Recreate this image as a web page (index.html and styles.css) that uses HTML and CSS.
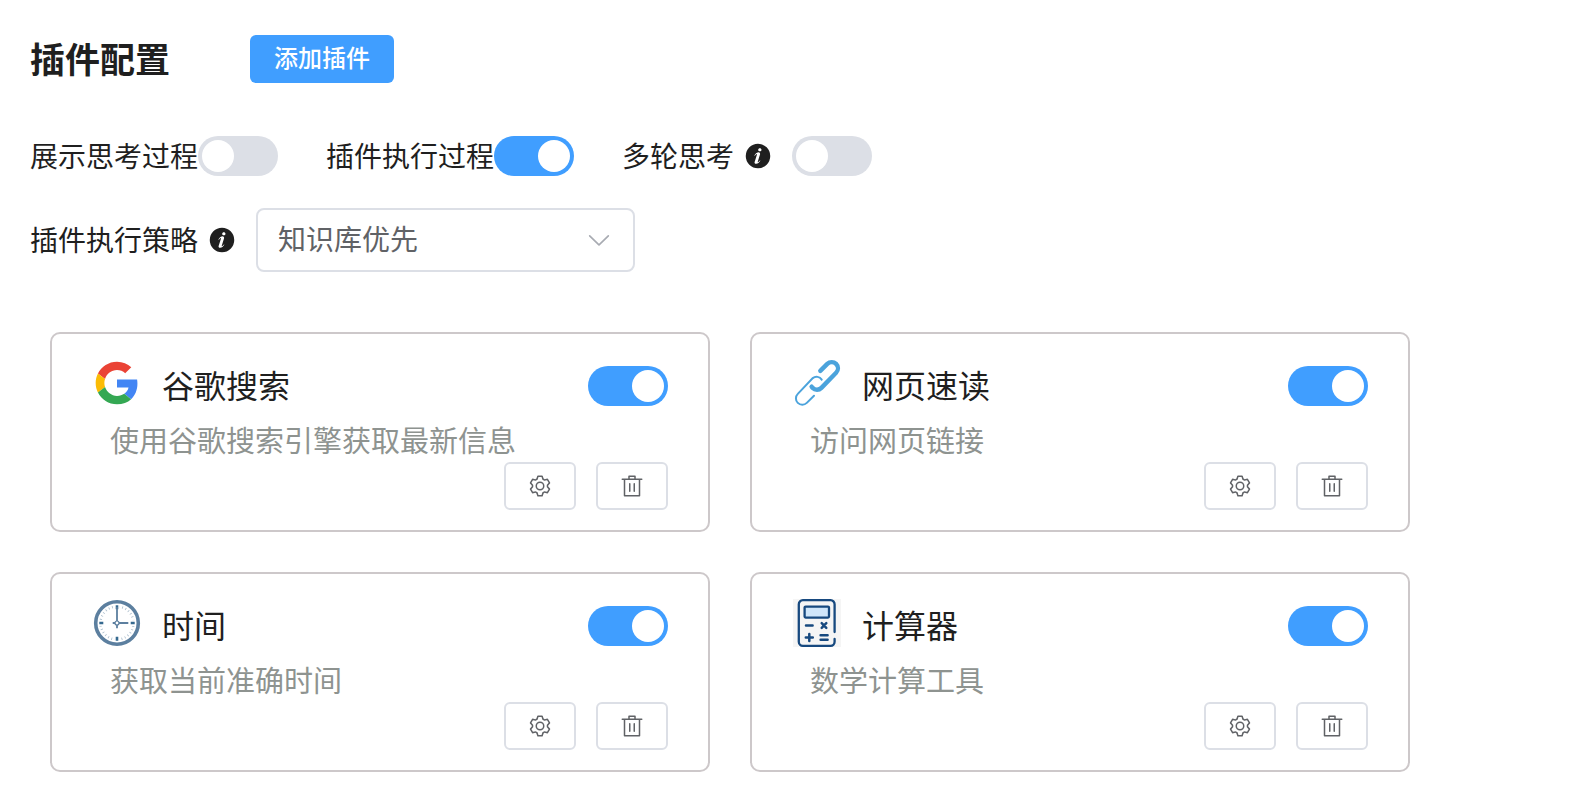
FILE: index.html
```html
<!DOCTYPE html>
<html lang="zh-CN">
<head>
<meta charset="UTF-8">
<meta name="viewport" content="width=device-width, initial-scale=1">
<title>插件配置</title>
<link rel="stylesheet" href="styles.css">
</head>
<body>
<svg class="sprite" aria-hidden="true">
  <symbol id="icon-setting" viewBox="0 0 1024 1024"><path fill="currentColor" d="M600.704 64a32 32 0 0 1 30.464 22.208l35.2 109.376c14.784 7.232 28.928 15.36 42.432 24.512l112.384-24.192a32 32 0 0 1 34.432 15.36L944.32 364.8a32 32 0 0 1-4.032 37.504l-77.12 85.12a357.12 357.12 0 0 1 0 49.024l77.12 85.248a32 32 0 0 1 4.032 37.504l-88.704 153.6a32 32 0 0 1-34.432 15.296L708.8 803.904c-13.44 9.088-27.648 17.28-42.368 24.512l-35.264 109.376A32 32 0 0 1 600.704 960H423.296a32 32 0 0 1-30.464-22.208L357.696 828.48a351.616 351.616 0 0 1-42.56-24.64l-112.32 24.256a32 32 0 0 1-34.432-15.36L79.68 659.2a32 32 0 0 1 4.032-37.504l77.12-85.248a357.12 357.12 0 0 1 0-48.896l-77.12-85.248A32 32 0 0 1 79.68 364.8l88.704-153.6a32 32 0 0 1 34.432-15.296l112.32 24.256c13.568-9.152 27.776-17.408 42.56-24.64l35.2-109.312A32 32 0 0 1 423.232 64H600.64zm-23.424 64H446.72l-36.352 113.088-24.512 11.968a294.113 294.113 0 0 0-34.816 20.096l-22.656 15.36-116.224-25.088-65.28 113.152 79.68 88.192-1.92 27.136a293.12 293.12 0 0 0 0 40.192l1.92 27.136-79.808 88.192 65.344 113.152 116.224-25.024 22.656 15.296a294.113 294.113 0 0 0 34.816 20.096l24.512 11.968L446.72 896h130.688l36.48-113.152 24.448-11.904a288.282 288.282 0 0 0 34.752-20.096l22.592-15.296 116.288 25.024 65.28-113.152-79.744-88.192 1.92-27.136a293.12 293.12 0 0 0 0-40.256l-1.92-27.136 79.808-88.128-65.344-113.152-116.288 24.96-22.592-15.232a287.616 287.616 0 0 0-34.752-20.096l-24.448-11.904L577.344 128zM512 320a192 192 0 1 1 0 384 192 192 0 0 1 0-384m0 64a128 128 0 1 0 0 256 128 128 0 0 0 0-256"/></symbol>
  <symbol id="icon-delete" viewBox="0 0 1024 1024"><path fill="currentColor" d="M160 256H96a32 32 0 0 1 0-64h256V95.936a32 32 0 0 1 32-32h256a32 32 0 0 1 32 32V192h256a32 32 0 1 1 0 64h-64v672a32 32 0 0 1-32 32H192a32 32 0 0 1-32-32zm448-64v-64H416v64zM224 896h576V256H224zm192-128a32 32 0 0 1-32-32V416a32 32 0 0 1 64 0v320a32 32 0 0 1-32 32m192 0a32 32 0 0 1-32-32V416a32 32 0 0 1 64 0v320a32 32 0 0 1-32 32"/></symbol>
  <symbol id="icon-info" viewBox="0 0 1024 1024"><path fill="currentColor" d="M512 64a448 448 0 1 1 0 896.064A448 448 0 0 1 512 64m67.2 275.072c33.28 0 60.288-23.104 60.288-57.344s-27.072-57.344-60.288-57.344c-33.28 0-60.16 23.104-60.16 57.344s26.88 57.344 60.16 57.344M590.912 699.2c0-6.848 2.368-24.64 1.024-34.752l-52.608 60.544c-10.88 11.456-24.512 19.392-30.912 17.28a12.992 12.992 0 0 1-8.256-14.72l87.68-276.992c7.168-35.136-12.544-67.2-54.336-71.296-44.096 0-108.992 44.736-148.48 101.504 0 6.784-1.28 23.68.064 33.792l52.544-60.608c10.88-11.328 23.552-19.328 29.952-17.152a12.8 12.8 0 0 1 7.808 16.128L388.48 728.576c-10.048 32.256 8.96 63.872 55.04 71.04 67.84 0 107.904-43.648 147.456-100.416z"/></symbol>
</svg>

<main class="page">
  <header class="header">
    <h1 class="header-title">插件配置</h1>
    <button class="btn-primary" type="button">添加插件</button>
  </header>

  <div class="options">
    <div class="option">
      <label class="label" for="show-thinking">展示思考过程</label>
      <input class="switch" id="show-thinking" type="checkbox" role="switch">
    </div>
    <div class="option">
      <label class="label" for="show-plugin">插件执行过程</label>
      <input class="switch" id="show-plugin" type="checkbox" role="switch" checked>
    </div>
    <div class="option">
      <label class="label" for="multi-round">多轮思考</label>
      <svg class="info" aria-hidden="true"><use href="#icon-info"/></svg>
      <input class="switch" id="multi-round" type="checkbox" role="switch">
    </div>
  </div>

  <div class="strategy">
    <label class="label" for="strategy">插件执行策略</label>
    <svg class="info" aria-hidden="true"><use href="#icon-info"/></svg>
    <div class="select-wrap">
      <select class="select" id="strategy">
        <option selected>知识库优先</option>
      </select>
      <svg class="select-arrow" viewBox="0 0 1024 1024" aria-hidden="true"><path fill="currentColor" d="M831.872 340.864 512 652.672 192.128 340.864a30.592 30.592 0 0 0-42.752 0 29.12 29.12 0 0 0 0 41.6L489.664 714.24a32 32 0 0 0 44.672 0l340.288-331.712a29.12 29.12 0 0 0 0-41.728 30.592 30.592 0 0 0-42.752 0z"/></svg>
    </div>
  </div>

  <section class="cards">
    <article class="card">
      <div class="card-head">
        <svg class="card-icon" viewBox="-3 -3 54 54" aria-hidden="true">
          <path fill="#EA4335" d="M24 9.5c3.54 0 6.71 1.22 9.21 3.6l6.85-6.85C35.9 2.38 30.47 0 24 0 14.62 0 6.51 5.38 2.56 13.22l7.98 6.19C12.43 13.72 17.74 9.5 24 9.5z"/>
          <path fill="#4285F4" d="M46.98 24.55c0-1.57-.15-3.09-.38-4.55H24v9.02h12.94c-.58 2.96-2.26 5.48-4.78 7.18l7.73 6c4.51-4.18 7.09-10.36 7.09-17.65z"/>
          <path fill="#FBBC05" d="M10.53 28.59c-.48-1.45-.76-2.99-.76-4.59s.27-3.14.76-4.59l-7.98-6.19C.92 16.46 0 20.12 0 24c0 3.88.92 7.54 2.56 10.78l7.97-6.19z"/>
          <path fill="#34A853" d="M24 48c6.48 0 11.93-2.13 15.89-5.81l-7.73-6c-2.15 1.45-4.92 2.3-8.16 2.3-6.26 0-11.57-4.22-13.47-9.91l-7.98 6.19C6.51 42.62 14.62 48 24 48z"/>
        </svg>
        <h2 class="card-title" id="plugin-google">谷歌搜索</h2>
        <input class="switch" type="checkbox" role="switch" aria-labelledby="plugin-google" checked>
      </div>
      <p class="card-desc">使用谷歌搜索引擎获取最新信息</p>
      <div class="card-actions">
        <button class="btn-icon" type="button" aria-label="设置"><svg class="action-icon"><use href="#icon-setting"/></svg></button>
        <button class="btn-icon" type="button" aria-label="删除"><svg class="action-icon"><use href="#icon-delete"/></svg></button>
      </div>
    </article>

    <article class="card">
      <div class="card-head">
        <svg class="card-icon" viewBox="0 0 48 48" fill="none" stroke="#4ba3dc" stroke-linecap="round" aria-hidden="true">
          <path stroke-width="4.4" d="M27.3 11.9L34.3 4.9A6.2 6.2 0 0 1 43.1 13.7L28.4 28.9A6.2 6.2 0 0 1 19.6 28.9L18.6 27.7"/>
          <path stroke-width="2" d="M28.7 20.6A6.1 6.1 0 0 0 19.8 19.1L4.8 34.9A6.3 6.3 0 0 0 13.8 43.9L21 36.8"/>
        </svg>
        <h2 class="card-title" id="plugin-web">网页速读</h2>
        <input class="switch" type="checkbox" role="switch" aria-labelledby="plugin-web" checked>
      </div>
      <p class="card-desc">访问网页链接</p>
      <div class="card-actions">
        <button class="btn-icon" type="button" aria-label="设置"><svg class="action-icon"><use href="#icon-setting"/></svg></button>
        <button class="btn-icon" type="button" aria-label="删除"><svg class="action-icon"><use href="#icon-delete"/></svg></button>
      </div>
    </article>

    <article class="card">
      <div class="card-head">
        <svg class="card-icon" viewBox="0 0 48 48" fill="none" aria-hidden="true">
          <circle cx="24" cy="24" r="21.3" stroke="#5c7f9f" stroke-width="3.6"/>
          <circle cx="24" cy="24" r="16.5" stroke="#a9bccb" stroke-width="2.4" stroke-dasharray="0.8 2.656" stroke-dashoffset="0.4"/>
          <path stroke="#fff" stroke-width="5.5" d="M24 6V11M24 37V42M6 24H11M37 24H42"/>
          <path stroke="#35698f" stroke-width="2.6" d="M24 6.3V10.3M24 37.7V41.7M6.3 24H10.3M37.7 24H41.7"/>
          <path stroke="#5c7f9f" stroke-width="1.8" d="M24 8V29.3M19.7 24H35.3"/>
          <circle cx="24" cy="24" r="2" fill="#fff" stroke="#5c7f9f" stroke-width="1.2"/>
        </svg>
        <h2 class="card-title" id="plugin-time">时间</h2>
        <input class="switch" type="checkbox" role="switch" aria-labelledby="plugin-time" checked>
      </div>
      <p class="card-desc">获取当前准确时间</p>
      <div class="card-actions">
        <button class="btn-icon" type="button" aria-label="设置"><svg class="action-icon"><use href="#icon-setting"/></svg></button>
        <button class="btn-icon" type="button" aria-label="删除"><svg class="action-icon"><use href="#icon-delete"/></svg></button>
      </div>
    </article>

    <article class="card">
      <div class="card-head">
        <svg class="card-icon" viewBox="0 0 48 48" fill="none" stroke="#17497f" stroke-width="2.3" stroke-linecap="round" aria-hidden="true">
          <path fill="#f5f5f5" stroke="none" d="M0 0H48V48H0z"/>
          <path d="M41.6 33V5.2A4 4 0 0 0 37.6 1.2H9.8A4 4 0 0 0 5.8 5.2V42.8A4 4 0 0 0 9.8 46.8H37.6A4 4 0 0 0 41.6 42.8V40"/>
          <rect x="11.6" y="7.6" width="24.4" height="11" rx="1" fill="#d0e6fa"/>
          <path stroke-width="2.5" d="M13 26.5H19.6M28.7 24.2L33.3 28.8M33.3 24.2L28.7 28.8M12.8 38.4H19.8M16.3 34.9V41.9M27.6 36.2H34.6M27.6 40.8H34.6"/>
        </svg>
        <h2 class="card-title" id="plugin-calc">计算器</h2>
        <input class="switch" type="checkbox" role="switch" aria-labelledby="plugin-calc" checked>
      </div>
      <p class="card-desc">数学计算工具</p>
      <div class="card-actions">
        <button class="btn-icon" type="button" aria-label="设置"><svg class="action-icon"><use href="#icon-setting"/></svg></button>
        <button class="btn-icon" type="button" aria-label="删除"><svg class="action-icon"><use href="#icon-delete"/></svg></button>
      </div>
    </article>
  </section>
</main>
</body>
</html>
```

FILE: styles.css
```css
* {
  box-sizing: border-box;
}

body {
  margin: 0;
  background: #fff;
  color: #1f1f1f;
  font-family: "Noto Sans CJK SC", sans-serif;
  font-size: 28px;
}

button,
select,
input {
  margin: 0;
  font-family: inherit;
}

.sprite {
  display: none;
}

.page {
  padding: 35px 30px 38px;
}

.header {
  display: flex;
  align-items: center;
  gap: 80px;
}

.header-title {
  margin: 0;
  padding-bottom: 2px;
  font-size: 35px;
  line-height: 46px;
  font-weight: 700;
}

.btn-primary {
  height: 48px;
  padding: 0 24px 4px;
  border: 0;
  border-radius: 6px;
  background: #409eff;
  color: #fff;
  font-size: 24px;
  font-weight: 500;
  line-height: 44px;
  cursor: pointer;
}

.options {
  display: flex;
  flex-wrap: wrap;
  gap: 16px 48px;
  margin-top: 53px;
}

.option,
.strategy {
  display: flex;
  align-items: center;
}

.label {
  padding-bottom: 2px;
  line-height: 38px;
}

.info {
  width: 28px;
  height: 28px;
  margin: 0 20px 0 10px;
}

.switch {
  flex: none;
  display: flex;
  align-items: center;
  width: 80px;
  height: 40px;
  padding: 4px;
  appearance: none;
  border-radius: 20px;
  background: #dcdfe6;
  cursor: pointer;
}

.switch::before {
  content: "";
  width: 32px;
  height: 32px;
  border-radius: 50%;
  background: #fff;
}

.switch:checked {
  justify-content: flex-end;
  background: #409eff;
}

.strategy {
  margin-top: 32px;
}

.select-wrap {
  position: relative;
  flex: 0 1 379px;
}

.select {
  display: block;
  width: 100%;
  height: 64px;
  padding: 0 56px 4px 20px;
  appearance: none;
  border: 2px solid #dcdfe6;
  border-radius: 8px;
  background: #fff;
  color: #606266;
  font-size: 28px;
}

.select-arrow {
  position: absolute;
  top: 18px;
  right: 22px;
  width: 28px;
  height: 28px;
  color: #a8abb2;
  pointer-events: none;
}

.cards {
  display: grid;
  grid-template-columns: repeat(2, minmax(0, 1fr));
  gap: 40px;
  max-width: 1360px;
  margin: 60px 20px 0;
}

.card {
  padding: 25px 40px 20px 41px;
  border: 2px solid #cdc8ca;
  border-radius: 10px;
}

.card-head {
  display: flex;
  align-items: center;
  height: 54px;
}

.card-icon {
  flex: none;
  align-self: flex-start;
  width: 48px;
  height: 48px;
}

.card-title {
  flex: 1;
  margin: 0 0 0 21px;
  padding-bottom: 4px;
  font-size: 32px;
  font-weight: 400;
  line-height: 50px;
}

.card-desc {
  margin: 6px 0 3px;
  padding-left: 17px;
  color: #8e9390;
  font-size: 29px;
  line-height: 40px;
}

.card-actions {
  display: flex;
  justify-content: flex-end;
  gap: 20px;
}

.btn-icon {
  display: flex;
  align-items: center;
  justify-content: center;
  width: 72px;
  height: 48px;
  padding: 0;
  border: 2px solid #dcdfe6;
  border-radius: 6px;
  background: #fff;
  color: #606266;
  cursor: pointer;
}

.action-icon {
  width: 24px;
  height: 24px;
}
```
